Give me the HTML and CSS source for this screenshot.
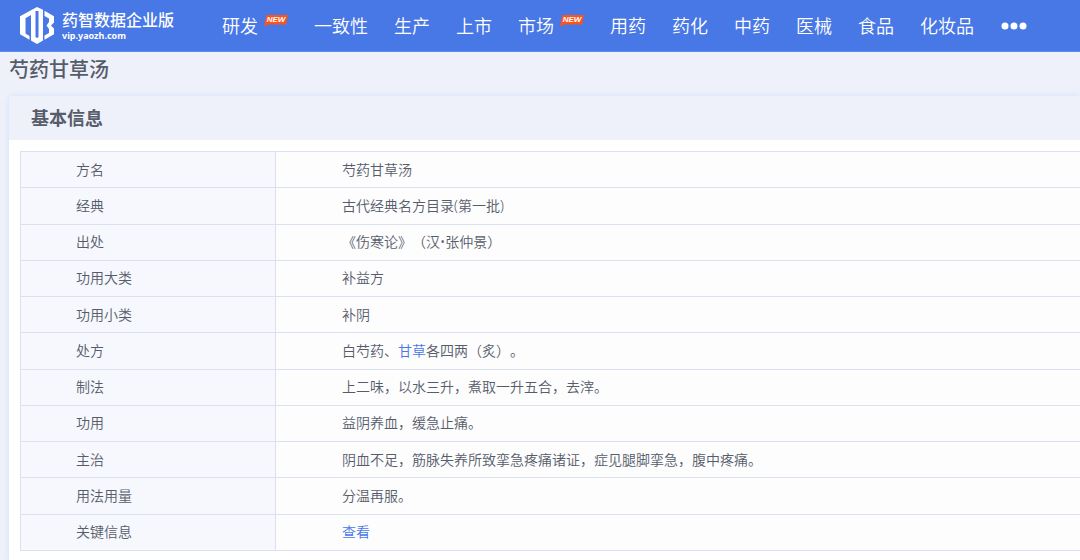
FILE: index.html
```html
<!DOCTYPE html>
<html lang="zh-CN">
<head>
<meta charset="utf-8">
<meta name="viewport" content="width=device-width, initial-scale=1">
<title>芍药甘草汤</title>
<link rel="stylesheet" href="styles.css">
</head>
<body>
<header class="topbar">
  <a class="brand" href="#">
    <svg class="brand-mark" viewBox="0 0 34 37" aria-hidden="true">
      <path fill="#fff" d="M17 0L23 2.800V33.500L17 37L11 33.500V8L5.500 11.200V26.500L9.500 29V32.700L0 27.200V9.300Z"/>
      <path fill="#4877e6" d="M15.500 4H18.500V30L17 31L15.500 30Z"/>
      <path fill="#fff" d="M24.500 3.800L34 9.300V15.500L31 18.500L34 21.500V27.200L24.500 32.700V28.500L29 26V22L26.500 18.500L29 15V11.500L24.500 9Z"/>
    </svg>
    <span class="brand-text">
      <span class="brand-name">药智数据企业版</span>
      <span class="brand-site">vip.yaozh.com</span>
    </span>
  </a>
  <nav class="nav">
    <a href="#">研发<span class="badge">NEW</span></a>
    <a href="#">一致性</a>
    <a href="#">生产</a>
    <a href="#">上市</a>
    <a href="#">市场<span class="badge">NEW</span></a>
    <a href="#">用药</a>
    <a href="#">药化</a>
    <a href="#">中药</a>
    <a href="#">医械</a>
    <a href="#">食品</a>
    <a href="#">化妆品</a>
    <button class="more" type="button" aria-label="更多">
      <svg class="more-dots" viewBox="0 0 28 8" aria-hidden="true"><g fill="#fff"><circle cx="5" cy="4" r="3.500"/><circle cx="14" cy="4" r="3.500"/><circle cx="23" cy="4" r="3.500"/></g></svg>
    </button>
  </nav>
</header>
<main class="page">
  <h1 class="page-title">芍药甘草汤</h1>
  <section class="card">
    <h2 class="card-title">基本信息</h2>
    <div class="card-body">
      <table class="info">
        <tbody>
          <tr><th scope="row">方名</th><td>芍药甘草汤</td></tr>
          <tr><th scope="row">经典</th><td>古代经典名方目录(第一批)</td></tr>
          <tr><th scope="row">出处</th><td>《伤寒论》（汉•张仲景）</td></tr>
          <tr><th scope="row">功用大类</th><td>补益方</td></tr>
          <tr><th scope="row">功用小类</th><td>补阴</td></tr>
          <tr><th scope="row">处方</th><td>白芍药、<a href="#">甘草</a>各四两（炙）。</td></tr>
          <tr><th scope="row">制法</th><td>上二味，以水三升，煮取一升五合，去滓。</td></tr>
          <tr><th scope="row">功用</th><td>益阴养血，缓急止痛。</td></tr>
          <tr><th scope="row">主治</th><td>阴血不足，筋脉失养所致挛急疼痛诸证，症见腿脚挛急，腹中疼痛。</td></tr>
          <tr><th scope="row">用法用量</th><td>分温再服。</td></tr>
          <tr><th scope="row">关键信息</th><td><a href="#">查看</a></td></tr>
        </tbody>
      </table>
    </div>
  </section>
</main>
</body>
</html>
```
FILE: styles.css
```css
* { box-sizing: border-box; }
body {
  margin: 0;
  background: #eef1fa;
  color: #565c6a;
  font-family: "Noto Sans", "Noto Sans CJK SC", sans-serif;
  font-size: 14px;
  text-spacing-trim: space-all;
  overflow-x: hidden;
}
a { color: #4877e8; text-decoration: none; }
.topbar {
  display: flex;
  align-items: center;
  gap: 48px;
  height: 52px;
  padding: 0 20px;
  background: #4877e6;
  border-bottom: 1px solid #5f8af0;
}
.brand { display: flex; align-items: center; gap: 8px; color: #fff; }
.brand-mark { width: 34px; height: 37px; }
.brand-text { display: flex; flex-direction: column; }
.brand-name { font-size: 16px; line-height: 20px; font-weight: 500; }
.brand-site { font-size: 9px; line-height: 12px; font-weight: 700; }
.nav { display: flex; align-items: center; gap: 26px; }
.nav a {
  display: flex;
  gap: 6px;
  color: #fff;
  font-size: 18px;
  line-height: 26px;
  font-weight: 350;
  white-space: nowrap;
}
.badge {
  width: 24px;
  height: 12px;
  margin-top: 2px;
  background: #fa541c;
  clip-path: polygon(10% 0, 100% 0, 92% 84%, 18% 84%, 0 100%);
  font: italic 700 8px/10px "Liberation Sans", sans-serif;
  text-align: center;
}
.more { display: flex; padding: 0; border: 0; background: none; cursor: pointer; }
.more-dots { width: 28px; height: 8px; }
.page { padding-left: 9px; }
.page-title { margin: 0; font-size: 20px; line-height: 36px; font-weight: 500; }
.card {
  margin-top: 8px;
  background: #fff;
  border-radius: 4px 0 0 0;
  box-shadow: 0 0 6px #d3e0fa;
}
.card-title {
  margin: 0;
  padding: 0 22px;
  background: #eef1fa;
  border-radius: 4px 0 0 0;
  font-size: 18px;
  line-height: 44px;
  font-weight: 700;
}
.card-body { padding: 11px 0 11px 11px; }
.info {
  width: 100%;
  height: 400px;
  border-collapse: collapse;
  line-height: 20px;
}
.info th, .info td { padding: 0; border: 1px solid #dce1ef; text-align: left; font-weight: 350; }
.info th { width: 255px; padding-left: 55px; background: #f6f8fd; }
.info td { padding-left: 66px; background: #fdfdfe; border-right: 0; }
```
